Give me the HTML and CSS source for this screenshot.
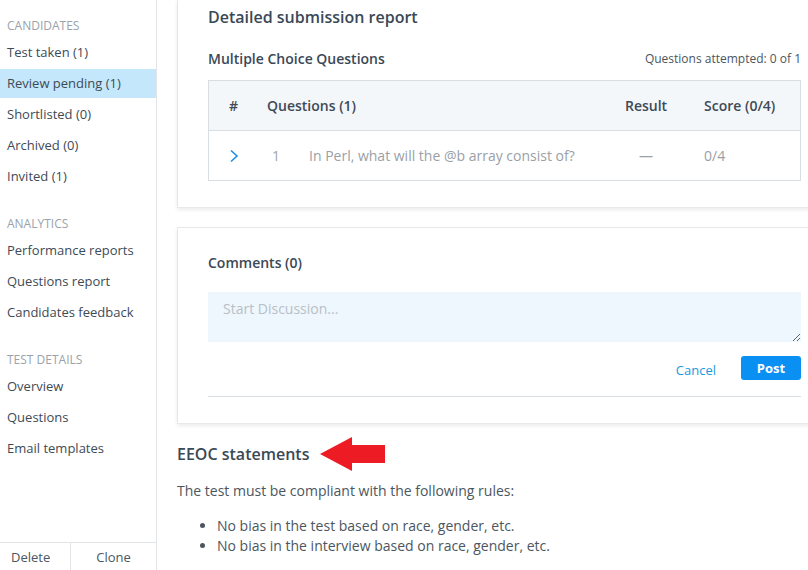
FILE: index.html
```html
<!DOCTYPE html>
<html lang="en">
<head>
    <meta charset="UTF-8">
    <meta name="viewport" content="width=device-width, initial-scale=1.0">
    <title>Test report</title>
    <link rel="stylesheet" href="styles.css">
</head>
<body>
    <aside class="sidebar">
        <div class="side-section">
            <h4>Candidates</h4>
            <ul>
                <li>Test taken (1)</li>
                <li class="active">Review pending (1)</li>
                <li>Shortlisted (0)</li>
                <li>Archived (0)</li>
                <li>Invited (1)</li>
            </ul>
        </div>
        <div class="side-section">
            <h4>Analytics</h4>
            <ul>
                <li>Performance reports</li>
                <li>Questions report</li>
                <li>Candidates feedback</li>
            </ul>
        </div>
        <div class="side-section">
            <h4>Test details</h4>
            <ul>
                <li>Overview</li>
                <li>Questions</li>
                <li>Email templates</li>
            </ul>
        </div>
        <div class="side-footer">
            <span class="delete">Delete</span>
            <span class="clone">Clone</span>
        </div>
    </aside>

    <main class="main">
        <section class="card report">
            <h2>Detailed submission report</h2>
            <div class="sub-head">
                <h3>Multiple Choice Questions</h3>
                <span class="attempted">Questions attempted: 0 of 1</span>
            </div>
            <div class="q-table">
                <div class="q-row q-head">
                    <span class="col-num">#</span>
                    <span>Questions (1)</span>
                    <span>Result</span>
                    <span>Score (0/4)</span>
                </div>
                <div class="q-row q-body">
                    <span class="col-num">
                        <svg width="10" height="14" viewBox="0 0 10 14"><path d="M2 1.5 L8 7 L2 12.5" fill="none" stroke="#1a8fe6" stroke-width="1.6"/></svg>
                    </span>
                    <span class="q-text"><span class="q-no">1</span>In Perl, what will the @b array consist of?</span>
                    <span class="q-result">—</span>
                    <span>0/4</span>
                </div>
            </div>
        </section>

        <section class="card comments">
            <h3>Comments (0)</h3>
            <textarea placeholder="Start Discussion..."></textarea>
            <div class="actions">
                <a class="cancel">Cancel</a>
                <button class="post">Post</button>
            </div>
            <hr>
        </section>

        <div class="eeoc">
            <h2>EEOC statements
                <svg class="arrow" width="66" height="36" viewBox="0 0 66 36"><polygon points="0,18 32,1 32,9 65,9 65,27 32,27 32,35" fill="#ed1c24"/></svg>
            </h2>
            <p>The test must be compliant with the following rules:</p>
            <ul>
                <li>No bias in the test based on race, gender, etc.</li>
                <li>No bias in the interview based on race, gender, etc.</li>
            </ul>
        </div>
    </main>
</body>
</html>
```

FILE: styles.css
```css
body {
    margin: 0;
    font-family: 'Open Sans', sans-serif;
    background: #fff;
    color: #3e4a56;
    display: flex;
    height: 570px;
    overflow: hidden;
}
.sidebar {
    width: 157px;
    flex-shrink: 0;
    border-right: 1px solid #e2e5e8;
    display: flex;
    flex-direction: column;
    padding-top: 16px;
    box-sizing: border-box;
    height: 570px;
}
.side-section {
    margin-bottom: 21px;
}
.side-section h4 {
    margin: 0 0 2px;
    padding-left: 7px;
    font-size: 12px;
    font-weight: normal;
    line-height: 20px;
    text-transform: uppercase;
    color: #9aa2aa;
}
.side-section ul {
    list-style: none;
    margin: 0;
    padding: 0;
}
.side-section li {
    height: 29px;
    line-height: 29px;
    margin-bottom: 2px;
    padding-left: 7px;
    font-size: 13px;
    color: #3e4a56;
}
.side-section li.active {
    background: #c4e7fb;
}
.side-footer {
    margin-top: auto;
    border-top: 1px solid #e2e5e8;
    display: flex;
    height: 27px;
    line-height: 29px;
    font-size: 13px;
    color: #4b5660;
}
.side-footer .delete {
    width: 71px;
    padding-left: 11px;
    box-sizing: border-box;
    border-right: 1px solid #e2e5e8;
}
.side-footer .clone {
    flex: 1;
    text-align: center;
}
.main {
    flex: 1;
    padding-left: 20px;
    overflow: hidden;
}
.card {
    width: 655px;
    box-sizing: border-box;
    border: 1px solid #e6e8ea;
    box-shadow: 0 2px 4px rgba(0, 0, 0, 0.08);
    padding: 0 30px;
    background: #fff;
}
.report {
    border-top: none;
    padding-top: 5px;
    padding-bottom: 26px;
}
.report h2 {
    margin: 0;
    font-size: 16px;
    font-weight: 600;
    line-height: 24px;
    color: #3b4856;
}
.sub-head {
    display: flex;
    justify-content: space-between;
    align-items: center;
    margin: 19px 0 12px;
    height: 20px;
}
.sub-head h3 {
    margin: 0;
    font-size: 14px;
    font-weight: 600;
    color: #3b4856;
}
.attempted {
    font-size: 12px;
    color: #4b5660;
}
.q-table {
    border: 1px solid #d8dee2;
}
.q-row {
    display: grid;
    grid-template-columns: 58px 1fr 79px 96px;
    align-items: center;
    height: 49px;
    font-size: 14px;
}
.q-head {
    background: #f4f7f9;
    border-bottom: 1px solid #d8dee2;
    font-weight: 600;
    color: #3e4a56;
}
.q-body {
    color: #9aa0a6;
}
.col-num {
    padding-left: 20px;
    display: flex;
    align-items: center;
}
.q-no {
    display: inline-block;
    width: 42px;
    padding-left: 5px;
    box-sizing: border-box;
    color: #a0a6ab;
}
.q-result {
    padding-left: 14px;
}
.comments {
    margin-top: 19px;
    padding-top: 25px;
    padding-bottom: 26px;
}
.comments h3 {
    margin: 0 0 19px;
    font-size: 14px;
    font-weight: 600;
    line-height: 20px;
    color: #3b4856;
}
.comments textarea {
    display: block;
    width: 100%;
    height: 50px;
    box-sizing: border-box;
    border: none;
    background: #eef7fd;
    padding: 7px 15px;
    font-family: 'Open Sans', sans-serif;
    font-size: 14px;
    color: #3e4a56;
}
.comments textarea::placeholder {
    color: #b8c0c6;
}
.actions {
    display: flex;
    justify-content: flex-end;
    align-items: center;
    margin-top: 14px;
    gap: 25px;
}
.cancel {
    font-size: 13px;
    color: #1a9ae0;
    padding-top: 4px;
}
.post {
    width: 60px;
    height: 24px;
    border: none;
    border-radius: 3px;
    background: #0a90f2;
    color: #fff;
    font-family: 'Open Sans', sans-serif;
    font-weight: 700;
    font-size: 13px;
}
.comments hr {
    border: none;
    border-top: 1px solid #d8dee2;
    margin: 16px 0 0;
}
.eeoc h2 {
    margin: 18px 0 0;
    font-size: 16px;
    font-weight: 600;
    line-height: 24px;
    color: #3b4856;
    position: relative;
}
.arrow {
    position: absolute;
    left: 143px;
    top: -6px;
}
.eeoc p {
    margin: 15px 0 0;
    font-size: 14px;
    line-height: 20px;
    color: #4b5660;
}
.eeoc ul {
    margin: 15px 0 0;
    padding-left: 40px;
    font-size: 14px;
    line-height: 20px;
    color: #4b5660;
}
```
